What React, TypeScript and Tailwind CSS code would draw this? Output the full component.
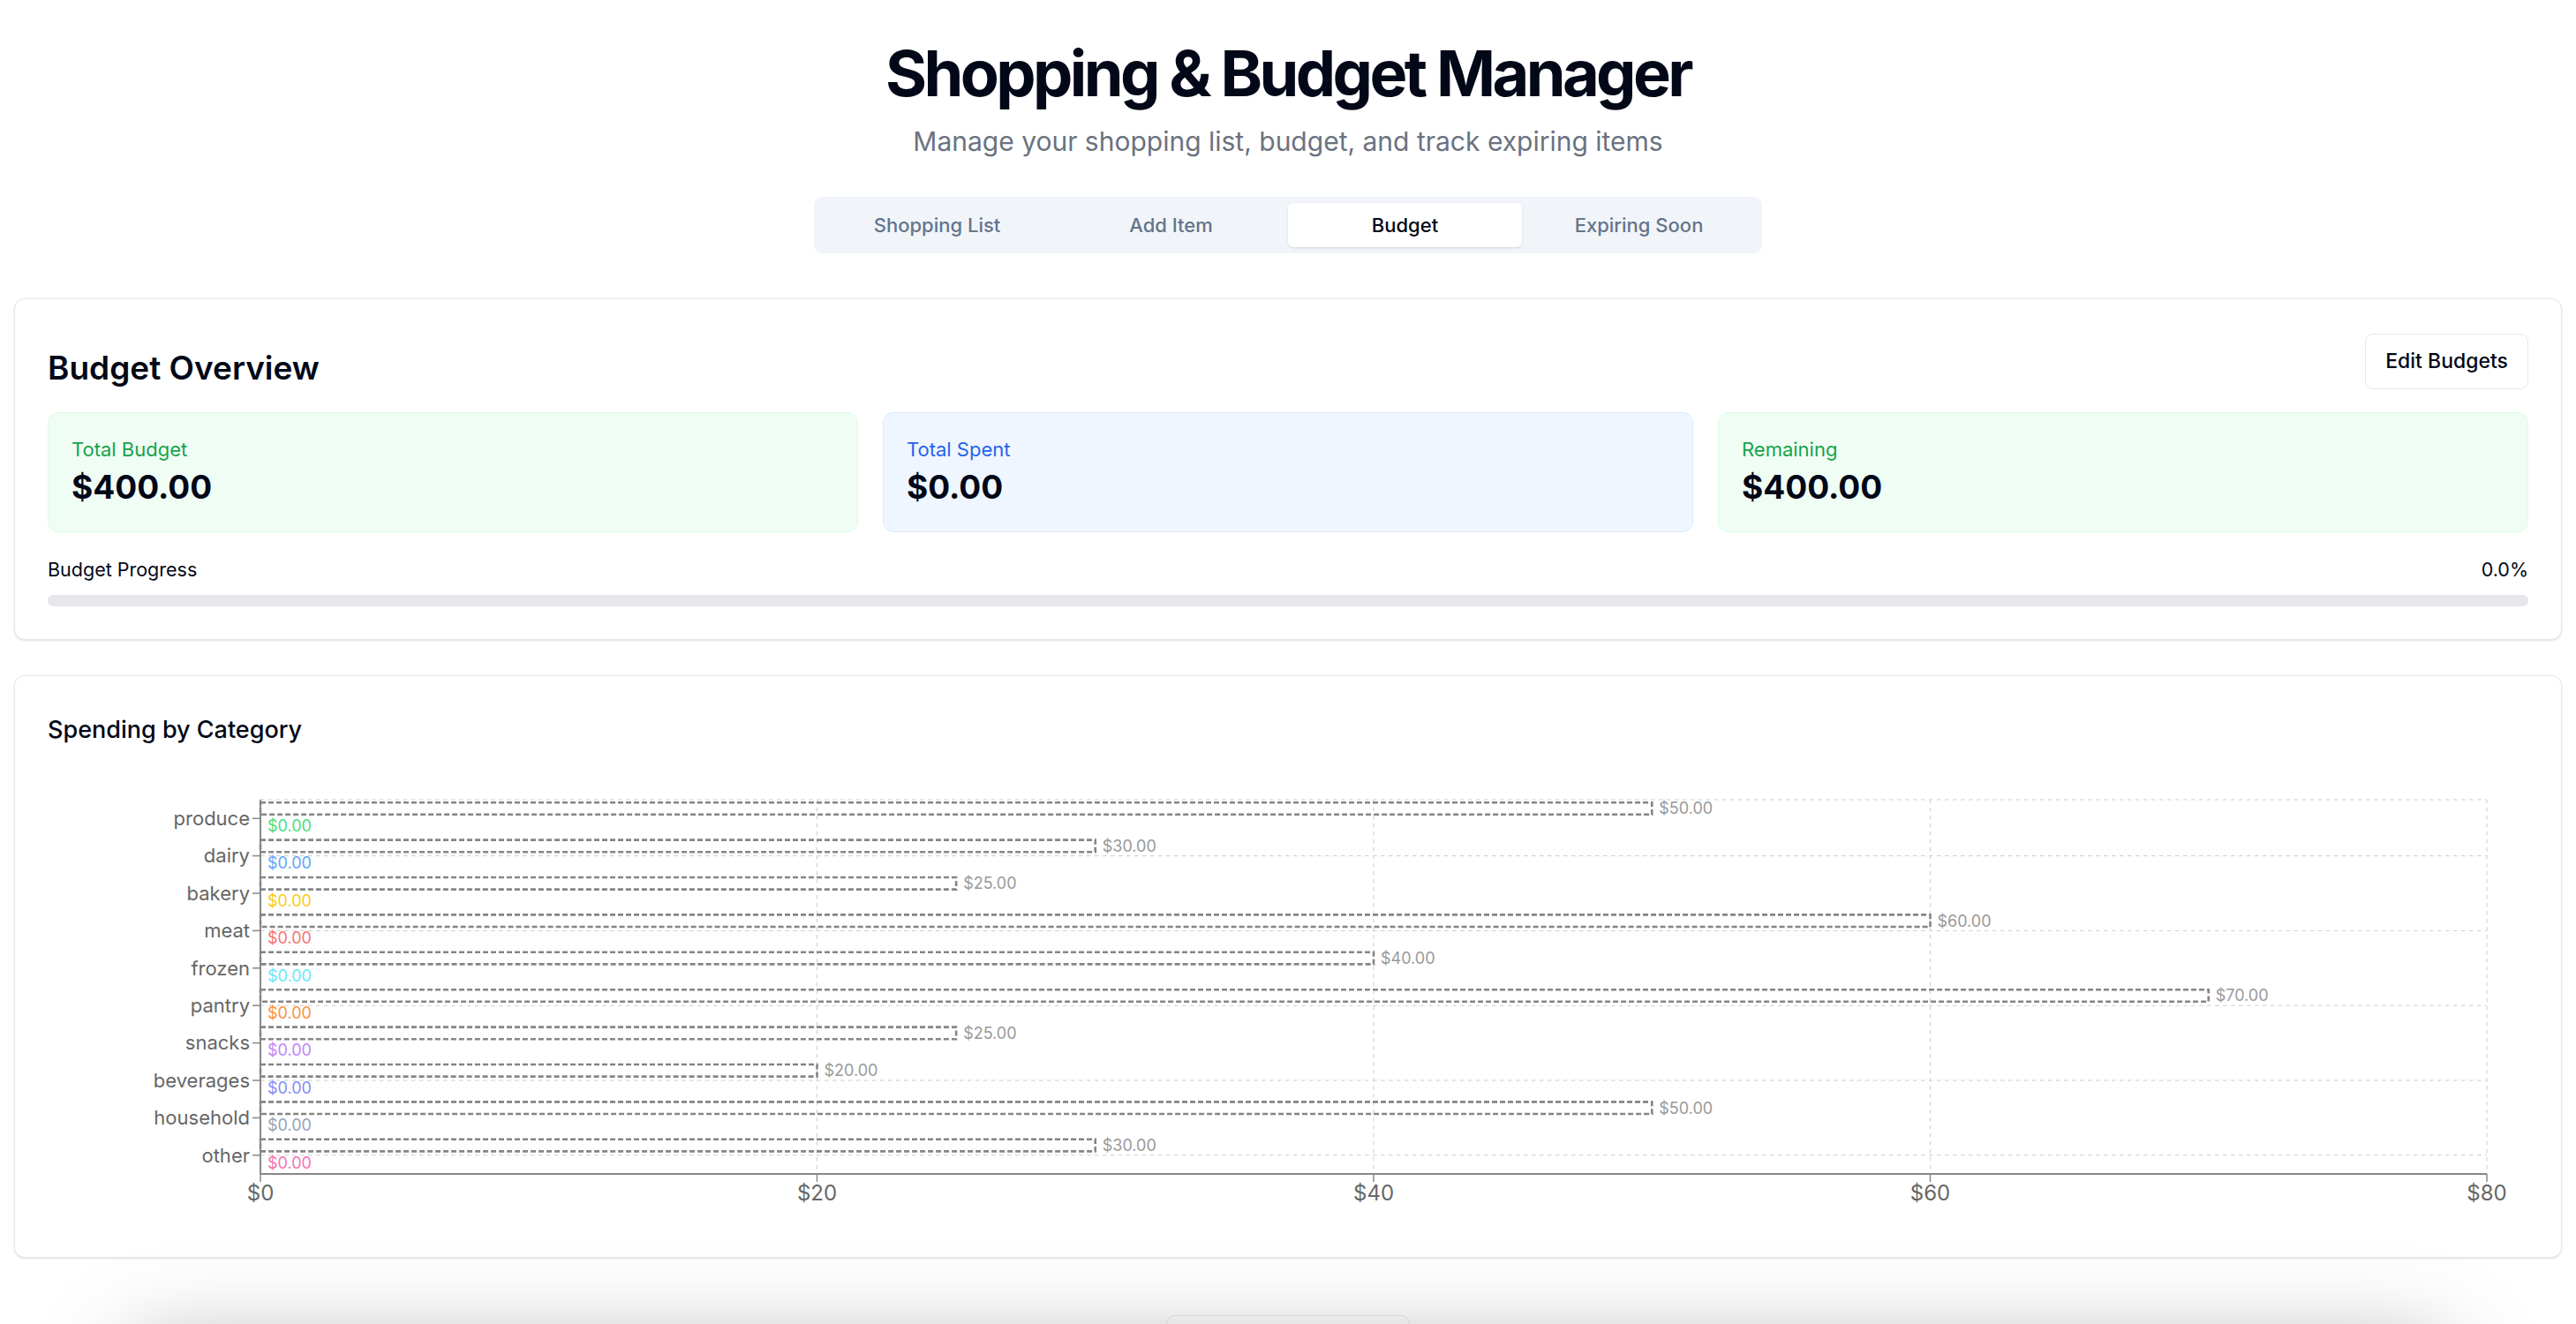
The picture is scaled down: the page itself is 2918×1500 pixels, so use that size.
import React from "react";

const cats = [
  { name: "produce", budget: 50, color: "#4ade80" },
  { name: "dairy", budget: 30, color: "#60a5fa" },
  { name: "bakery", budget: 25, color: "#facc15" },
  { name: "meat", budget: 60, color: "#f87171" },
  { name: "frozen", budget: 40, color: "#67e8f9" },
  { name: "pantry", budget: 70, color: "#fb923c" },
  { name: "snacks", budget: 25, color: "#c084fc" },
  { name: "beverages", budget: 20, color: "#818cf8" },
  { name: "household", budget: 50, color: "#94a3b8" },
  { name: "other", budget: 30, color: "#f472b6" },
];

const X0 = 241;
const X1 = 2763;
const Y0 = 36;
const Y1 = 460;
const BAND = (Y1 - Y0) / cats.length;
const xs = (v: number) => X0 + (v / 80) * (X1 - X0);

function Chart() {
  return (
    <svg width={2810} height={510} className="block" style={{ fontFamily: "Inter, sans-serif" }}>
      {/* grid */}
      <line x1={X0} y1={Y0} x2={X1} y2={Y0} stroke="#ccc" strokeWidth={1} strokeDasharray="4.5 4.5" />
      {[1, 3, 5, 7, 9].map((i) => (
        <line key={i} x1={X0} y1={Y0 + BAND * (i + 0.5)} x2={X1} y2={Y0 + BAND * (i + 0.5)} stroke="#ccc" strokeWidth={1} strokeDasharray="4.5 4.5" />
      ))}
      {[20, 40, 60, 80].map((v) => (
        <line key={v} x1={xs(v)} y1={Y0} x2={xs(v)} y2={Y1} stroke="#ccc" strokeWidth={1} strokeDasharray="4.5 4.5" />
      ))}
      {/* bars */}
      {cats.map((c, i) => {
        const bt = Y0 + BAND * i;
        return (
          <g key={c.name}>
            <rect x={X0} y={bt + 3.2} width={xs(c.budget) - X0} height={13.6} fill="none" stroke="#858585" strokeWidth={2.6} strokeDasharray="6 3" />
            <text x={xs(c.budget) + 8} y={bt + 10 + 0.355 * 18} fontSize={18} fill="#999">
              ${c.budget.toFixed(2)}
            </text>
            <text x={X0 + 8} y={bt + 29.6 + 0.355 * 18} fontSize={18} fill={c.color}>
              $0.00
            </text>
          </g>
        );
      })}
      {/* y axis */}
      <line x1={X0} y1={Y0} x2={X0} y2={Y1} stroke="#888" strokeWidth={2} />
      {cats.map((c, i) => {
        const cy = Y0 + BAND * (i + 0.5);
        return (
          <g key={c.name}>
            <line x1={X0 - 9} y1={cy} x2={X0} y2={cy} stroke="#888" strokeWidth={1.5} />
            <text x={X0 - 12} y={cy + 0.355 * 22} fontSize={22} fill="#666" textAnchor="end">
              {c.name}
            </text>
          </g>
        );
      })}
      {/* x axis */}
      <line x1={X0} y1={Y1} x2={X1} y2={Y1} stroke="#888" strokeWidth={2} />
      {[0, 20, 40, 60, 80].map((v) => (
        <g key={v}>
          <line x1={xs(v)} y1={Y1} x2={xs(v)} y2={Y1 + 9} stroke="#888" strokeWidth={1.5} />
          <text x={xs(v)} y={490} fontSize={24} fill="#666" textAnchor="middle">
            ${v}
          </text>
        </g>
      ))}
    </svg>
  );
}

export default function App() {
  return (
    <div className="h-[1500px] overflow-hidden bg-white px-4 font-['Inter',sans-serif] text-[#020817]">
      <div className="pt-[47px] text-center">
        <h1 className="text-[72px] font-bold leading-[72px] tracking-[-0.05em] text-[#020817]">Shopping &amp; Budget Manager</h1>
        <p className="mt-[20px] text-[30px] leading-[42px] text-[#6b7280]">Manage your shopping list, budget, and track expiring items</p>
      </div>

      <div className="mx-auto mt-[42px] grid h-[64px] w-[1074px] grid-cols-4 rounded-[9px] bg-[#f1f5f9] p-[7px]">
        {["Shopping List", "Add Item", "Budget", "Expiring Soon"].map((t) => (
          <div
            key={t}
            className={
              t === "Budget"
                ? "flex items-center justify-center rounded-[6px] bg-white text-[22px] font-medium text-[#020817] shadow-sm"
                : "flex items-center justify-center text-[22px] font-medium text-[#64748b]"
            }
          >
            {t}
          </div>
        ))}
      </div>

      {/* Budget overview card */}
      <div className="mt-[51px] rounded-[12px] border border-[#e2e8f0] bg-white px-[37px] pb-[37px] pt-[39px] shadow-sm">
        <div className="flex items-start justify-between">
          <h2 className="mt-[15px] text-[37px] font-semibold leading-[48px]">Budget Overview</h2>
          <button className="h-[63px] rounded-[9px] border border-[#e2e8f0] bg-white px-[22px] text-[23px] font-medium text-[#020817]">
            Edit Budgets
          </button>
        </div>
        <div className="mt-[26px] grid grid-cols-3 gap-[28px]">
          <div className="rounded-[12px] border border-[#dcfce7] bg-[#f0fdf4] p-[26px]">
            <div className="text-[22px] leading-[30px] text-[#16a34a]">Total Budget</div>
            <div className="mt-[4px] text-[37px] font-bold leading-[48px]">$400.00</div>
          </div>
          <div className="rounded-[12px] border border-[#dbeafe] bg-[#eff6ff] p-[26px]">
            <div className="text-[22px] leading-[30px] text-[#2563eb]">Total Spent</div>
            <div className="mt-[4px] text-[37px] font-bold leading-[48px]">$0.00</div>
          </div>
          <div className="rounded-[12px] border border-[#dcfce7] bg-[#f0fdf4] p-[26px]">
            <div className="text-[22px] leading-[30px] text-[#16a34a]">Remaining</div>
            <div className="mt-[4px] text-[37px] font-bold leading-[48px]">$400.00</div>
          </div>
        </div>
        <div className="mt-[27px] flex justify-between text-[21.5px] leading-[30px]">
          <span>Budget Progress</span>
          <span>0.0%</span>
        </div>
        <div className="mt-[14px] h-[13px] w-full rounded-full bg-[#e5e7eb]" />
      </div>

      {/* Spending chart card */}
      <div className="mt-[40px] rounded-[12px] border border-[#e2e8f0] bg-white px-[37px] pb-[44px] pt-[41px] shadow-sm">
        <h3 className="text-[27px] font-medium leading-[40px]">Spending by Category</h3>
        <div className="mt-[23px]">
          <Chart />
        </div>
      </div>

      <div className="relative mt-[85px] h-[600px] rounded-[12px] bg-white shadow-[0_-114px_100px_-134px_rgba(0,0,0,0.35)]">
        <div className="absolute left-1/2 top-[-20px] h-[60px] w-[276px] -translate-x-1/2 rounded-[10px] border border-[#cbd5e1]" />
      </div>
    </div>
  );
}
